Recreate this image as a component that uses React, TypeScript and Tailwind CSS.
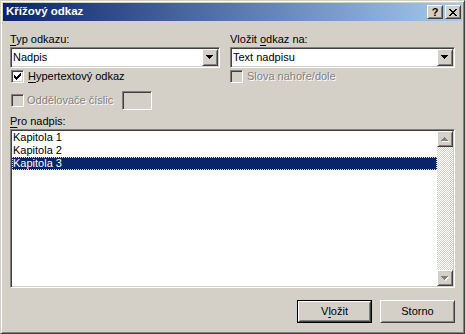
import type { ReactNode } from 'react';

const raised =
  'bg-[#d4d0c8] border border-t-[#fff] border-l-[#fff] border-r-[#404040] border-b-[#404040] shadow-[inset_1px_1px_0_#d4d0c8,inset_-1px_-1px_0_#808080]';
const sunken =
  'border border-t-[#808080] border-l-[#808080] border-r-[#fff] border-b-[#fff] shadow-[inset_1px_1px_0_#404040,inset_-1px_-1px_0_#d4d0c8]';
const disabledText = 'text-[#808080] [text-shadow:1px_1px_0_#fff]';

function Triangle({ up = false, gray = false }: { up?: boolean; gray?: boolean }) {
  const d = up ? 'M3 0h1v1h-1zM2 1h3v1h-3zM1 2h5v1h-5zM0 3h7v1h-7z' : 'M0 0h7v1h-7zM1 1h5v1h-5zM2 2h3v1h-3zM3 3h1v1h-1z';
  return (
    <svg width="8" height="5" viewBox="0 0 8 5" shapeRendering="crispEdges">
      {gray && <path d={d} fill="#fff" transform="translate(1 1)" />}
      <path d={d} fill={gray ? '#808080' : '#000'} />
    </svg>
  );
}

function DropButton() {
  return (
    <div className={`w-[16px] h-full flex items-center justify-center ${raised}`}>
      <Triangle />
    </div>
  );
}

function Combo({ value }: { value: string }) {
  return (
    <div className={`h-[21px] bg-white flex p-[1px] ${sunken}`}>
      <div className="flex-1 pl-[1px] flex items-center">{value}</div>
      <DropButton />
    </div>
  );
}

function CheckBox({ checked = false, disabled = false }: { checked?: boolean; disabled?: boolean }) {
  return (
    <span
      className={`w-[13px] h-[13px] shrink-0 flex items-center justify-center ${sunken} ${
        disabled ? 'bg-[#d4d0c8]' : 'bg-white'
      }`}
    >
      {checked && (
        <svg width="7" height="7" viewBox="0 0 7 7" shapeRendering="crispEdges">
          <path
            d="M6 0h1v1h-1zM5 1h2v1h-2zM0 2h1v1h-1zM4 2h3v1h-3zM0 3h2v1h-2zM3 3h3v1h-3zM0 4h5v1h-5zM1 5h3v1h-3zM2 6h1v1h-1z"
            fill="#000"
          />
        </svg>
      )}
    </span>
  );
}

function Label({ children }: { children: ReactNode }) {
  return <div className="h-[15px] leading-[13px] pt-[1px]">{children}</div>;
}

function U({ children }: { children: ReactNode }) {
  return <span className="underline underline-offset-[2px]">{children}</span>;
}

export default function App() {
  return (
    <div
      className="w-[465px] h-[334px] bg-[#d4d0c8] border border-t-[#d4d0c8] border-l-[#d4d0c8] border-r-[#404040] border-b-[#404040] p-[2px] shadow-[inset_1px_1px_0_#fff,inset_-1px_-1px_0_#808080] flex flex-col text-[11px] text-black select-none"
      style={{ fontFamily: '"Liberation Sans", Arial, sans-serif' }}
    >
      <div className="h-[18px] flex items-center pl-[3px] pr-[1px] bg-[linear-gradient(to_right,#0a246a,#a6caf0)]">
        <span className="flex-1 text-white font-bold text-[11.5px]">Křížový odkaz</span>
        <div className="flex gap-[2px]">
          <div className={`w-[16px] h-[14px] flex items-center justify-center ${raised}`}>
            <span className="font-bold text-[11px] leading-none">?</span>
          </div>
          <div className={`w-[16px] h-[14px] flex items-center justify-center ${raised}`}>
            <svg width="8" height="7" viewBox="0 0 8 7" shapeRendering="crispEdges">
              <path
                d="M0 0h2v1h-2zM6 0h2v1h-2zM1 1h2v1h-2zM5 1h2v1h-2zM2 2h4v1h-4zM3 3h2v1h-2zM2 4h4v1h-4zM1 5h2v1h-2zM5 5h2v1h-2zM0 6h2v1h-2zM6 6h2v1h-2z"
                fill="#000"
              />
            </svg>
          </div>
        </div>
      </div>

      <div className="flex-1 flex flex-col px-[7px] pt-[11px]">
        <div className="flex gap-[10px]">
          <div className="w-[210px] flex flex-col">
            <Label>
              <U>T</U>yp odkazu:
            </Label>
            <Combo value="Nadpis" />
            <div className="mt-[2px] h-[13px] flex items-center gap-[4px] pl-[1px]">
              <CheckBox checked />
              <span>
                <U>H</U>ypertextový odkaz
              </span>
            </div>
            <div className="mt-[7px] h-[20px] flex items-center pl-[1px]">
              <CheckBox disabled />
              <span className={`ml-[3px] ${disabledText}`}>Oddělovače číslic</span>
              <div className={`ml-[9px] w-[30px] h-[19px] bg-[#d4d0c8] ${sunken}`} />
            </div>
          </div>
          <div className="w-[225px] flex flex-col">
            <Label>
              Vložit <U>o</U>dkaz na:
            </Label>
            <Combo value="Text nadpisu" />
            <div className="mt-[2px] h-[13px] flex items-center gap-[4px]">
              <CheckBox disabled />
              <span className={disabledText}>Slova nahoře/dole</span>
            </div>
          </div>
        </div>

        <div className="mt-[4px]">
          <Label>
            <U>P</U>ro nadpis:
          </Label>
        </div>
        <div className={`h-[159px] bg-white flex p-[1px] ${sunken}`}>
          <div className="flex-1 flex flex-col">
            {['Kapitola 1', 'Kapitola 2', 'Kapitola 3'].map((item, i) => (
              <div
                key={item}
                className={`h-[13px] leading-[13px] pl-[1px] ${
                  i === 2 ? 'bg-[#0a246a] text-white outline outline-dotted outline-[#f5db95] -outline-offset-1' : ''
                }`}
              >
                {item}
              </div>
            ))}
          </div>
          <div className="w-[16px] flex flex-col">
            <div className={`h-[16px] flex items-center justify-center ${raised}`}>
              <Triangle up gray />
            </div>
            <div className="flex-1 bg-[repeating-conic-gradient(#d4d0c8_0_25%,#fff_0_50%)] bg-[length:2px_2px]" />
            <div className={`h-[16px] flex items-center justify-center ${raised}`}>
              <Triangle gray />
            </div>
          </div>
        </div>

        <div className="mt-[12px] flex justify-end gap-[8px]">
          <div className="w-[75px] h-[23px] border border-black flex">
            <div className={`flex-1 flex items-center justify-center ${raised}`}>
              <span>
                V<U>l</U>ožit
              </span>
            </div>
          </div>
          <div className={`w-[75px] h-[23px] flex items-center justify-center ${raised}`}>Storno</div>
        </div>
      </div>
    </div>
  );
}
